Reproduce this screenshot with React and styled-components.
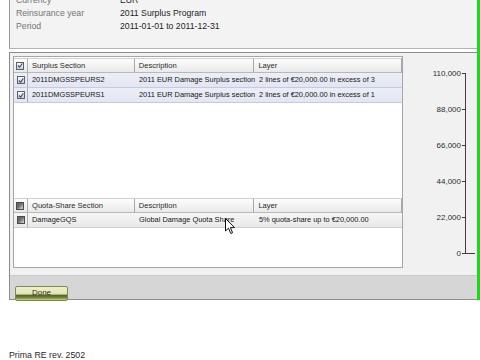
import styled, { createGlobalStyle } from 'styled-components'

const GlobalStyle = createGlobalStyle`
    html, body {
        margin: 0;
        padding: 0;
        background: #ffffff;
        overflow: hidden;
    }
    body {
        font-family: "Liberation Sans", Arial, sans-serif;
        color: #333;
    }
`;

const info = [
    ['Currency', 'EUR'],
    ['Reinsurance year', '2011 Surplus Program'],
    ['Period', '2011-01-01 to 2011-12-31'],
];

const surplus = [
    { code: '2011DMGSSPEURS2', desc: '2011 EUR Damage Surplus section', layer: '2 lines of €20,000.00 in excess of 3' },
    { code: '2011DMGSSPEURS1', desc: '2011 EUR Damage Surplus section', layer: '2 lines of €20,000.00 in excess of 1' },
];

const quota = [
    { code: 'DamageGQS', desc: 'Global Damage Quota Share', layer: '5% quota-share up to €20,000.00' },
];

const ticks = ['110,000', '88,000', '66,000', '44,000', '22,000', '0'];

function Check({ checked }) {
    return (
        <Box $checked={checked}>
            {checked && (
                <svg width="7" height="7" viewBox="0 0 7 7">
                    <path d="M1 3.5 L3 5.5 L6.2 1" fill="none" stroke="#3d4a6a" strokeWidth="1.3" />
                </svg>
            )}
        </Box>
    );
}

function Grid({ title, rows, checked, height }) {
    return (
        <Section $height={height}>
            <HeaderRow>
                <CheckCell><Check checked={checked} /></CheckCell>
                <HeadCell $w={107}>{title}</HeadCell>
                <HeadCell $w={120}>Description</HeadCell>
                <HeadCell $w={147} $last>Layer</HeadCell>
            </HeaderRow>
            {rows.map((r) => (
                <DataRow key={r.code} $selected={checked}>
                    <CheckCell><Check checked={checked} /></CheckCell>
                    <Cell $w={107}>{r.code}</Cell>
                    <Cell $w={120}>{r.desc}</Cell>
                    <Cell $w={147}>{r.layer}</Cell>
                </DataRow>
            ))}
        </Section>
    );
}

function Axis() {
    return (
        <svg width="74" height="222" viewBox="0 0 74 222">
            <line x1="62.5" y1="20" x2="62.5" y2="200" stroke="#4a3c3c" strokeWidth="1" />
            <line x1="62" y1="200.5" x2="72" y2="200.5" stroke="#4a3c3c" strokeWidth="1" />
            {ticks.map((t, i) => (
                <g key={t}>
                    <line x1="59" y1={20.5 + i * 36} x2="63" y2={20.5 + i * 36} stroke="#4a3c3c" strokeWidth="1" />
                    <text
                        x="58"
                        y={23 + i * 36}
                        textAnchor="end"
                        fontSize="8"
                        fill="#2e2e2e"
                        fontFamily="Liberation Sans, Arial, sans-serif"
                    >
                        {t}
                    </text>
                </g>
            ))}
        </svg>
    );
}

function Cursor() {
    return (
        <Pointer width="11" height="17" viewBox="0 0 11 17">
            <path d="M0.5 0.5 L0.5 13 L3.5 10.2 L5.8 15.5 L7.6 14.7 L5.4 9.6 L9.5 9.6 Z" fill="#fff" stroke="#111" strokeWidth="1" />
        </Pointer>
    );
}

export default function App() {
    return (
        <Page>
            <GlobalStyle />
            <Frame>
                <InfoBox>
                    {info.map(([label, value]) => (
                        <InfoRow key={label}>
                            <Label>{label}</Label>
                            <Value>{value}</Value>
                        </InfoRow>
                    ))}
                </InfoBox>
                <Panel>
                    <PanelBody>
                        <TableArea>
                            <Grid title="Surplus Section" rows={surplus} checked height={140} />
                            <Grid title="Quota-Share Section" rows={quota} checked={false} />
                            <Cursor />
                        </TableArea>
                        <Chart><Axis /></Chart>
                    </PanelBody>
                    <Footer>
                        <DoneButton>Done</DoneButton>
                    </Footer>
                </Panel>
            </Frame>
            <Version>Prima RE rev. 2502</Version>
        </Page>
    );
}

const Page = styled.div`
    width: 480px;
    height: 360px;
    padding-left: 9px;
    box-sizing: border-box;
`;

const Frame = styled.div`
    width: 471px;
    box-sizing: border-box;
    border-right: 3px solid #12e012;
    display: flex;
    flex-direction: column;
`;

const InfoBox = styled.div`
    margin-top: -9px;
    padding: 3px 0 15px 6px;
    background: #f3f3f3;
    border-left: 1px solid #9a9a9a;
    border-bottom: 1px solid #b4b4b4;
`;

const InfoRow = styled.div`
    display: flex;
    height: 13px;
    line-height: 13px;
    font-size: 8.7px;
`;

const Label = styled.div`
    width: 104px;
    color: #737373;
`;

const Value = styled.div`
    color: #1e1e1e;
`;

const Panel = styled.div`
    margin-top: 3px;
    border: 1px solid #8c8c8c;
    border-right: none;
    background: #f1f1f1;
`;

const PanelBody = styled.div`
    display: flex;
    height: 222px;
`;

const TableArea = styled.div`
    position: relative;
    margin: 3px 0 0 3px;
    width: 390px;
    height: 212px;
    box-sizing: border-box;
    border: 1px solid #a6a6a6;
    background: #ffffff;
    padding-top: 1px;
`;

const Section = styled.div`
    height: ${(p) => (p.$height ? `${p.$height}px` : 'auto')};
`;

const HeaderRow = styled.div`
    display: flex;
    height: 15px;
    box-sizing: border-box;
    background: linear-gradient(#fdfdfd, #e9e9e9);
    border-top: 1px solid #d0d0d0;
    border-bottom: 1px solid #b8b8b8;
    border-right: 1px solid #a8a8a8;
`;

const DataRow = styled.div`
    display: flex;
    height: 15px;
    box-sizing: border-box;
    background: ${(p) => (p.$selected ? 'linear-gradient(#eceef7, #e3e6f2)' : 'linear-gradient(#f6f6f6, #e9e9e9)')};
    border-bottom: 1px solid ${(p) => (p.$selected ? '#c6cadc' : '#cfcfcf')};
`;

const CheckCell = styled.div`
    width: 14px;
    display: flex;
    align-items: center;
    justify-content: center;
    border-right: 1px solid #b0b0b0;
    box-sizing: border-box;
`;

const HeadCell = styled.div`
    width: ${(p) => p.$w}px;
    box-sizing: border-box;
    padding-left: 4px;
    font-size: 7.6px;
    line-height: 13px;
    color: #2a2a2a;
    border-right: ${(p) => (p.$last ? 'none' : '1px solid #a8a8a8')};
    white-space: nowrap;
`;

const Cell = styled.div`
    width: ${(p) => p.$w}px;
    box-sizing: border-box;
    padding-left: 4px;
    font-size: 7.4px;
    line-height: 14px;
    color: #161616;
    white-space: nowrap;
    overflow: hidden;
`;

const Box = styled.span`
    width: 8px;
    height: 8px;
    box-sizing: border-box;
    display: flex;
    align-items: center;
    justify-content: center;
    border: 1px solid ${(p) => (p.$checked ? '#5a6070' : '#4a4a4a')};
    background: ${(p) => (p.$checked ? 'linear-gradient(#ffffff, #c9cdd8)' : 'linear-gradient(135deg, #6a6a6a, #6a6a6a 40%, #e0e0e0)')};
`;

const Pointer = styled.svg`
    position: absolute;
    left: 211px;
    top: 161px;
`;

const Chart = styled.div`
    flex: 1;
    display: flex;
`;

const Footer = styled.div`
    height: 24px;
    box-sizing: border-box;
    padding: 5px 0 0 5px;
    background: #d6d6d6;
    border-top: 1px solid #cacaca;
`;

const DoneButton = styled.button`
    width: 53px;
    height: 15px;
    padding: 0;
    border: 1px solid #7e8a52;
    border-radius: 2px;
    background: linear-gradient(#eef0cc 0%, #dfe5ac 55%, #53612a 62%, #6f7d3a 80%, #c8d08a 100%);
    font-family: "Liberation Sans", Arial, sans-serif;
    font-size: 8px;
    line-height: 12px;
    color: #2f3320;
    cursor: pointer;
`;

const Version = styled.div`
    margin-top: 50px;
    font-size: 8.8px;
    line-height: 11px;
    color: #2a2a2a;
`;
